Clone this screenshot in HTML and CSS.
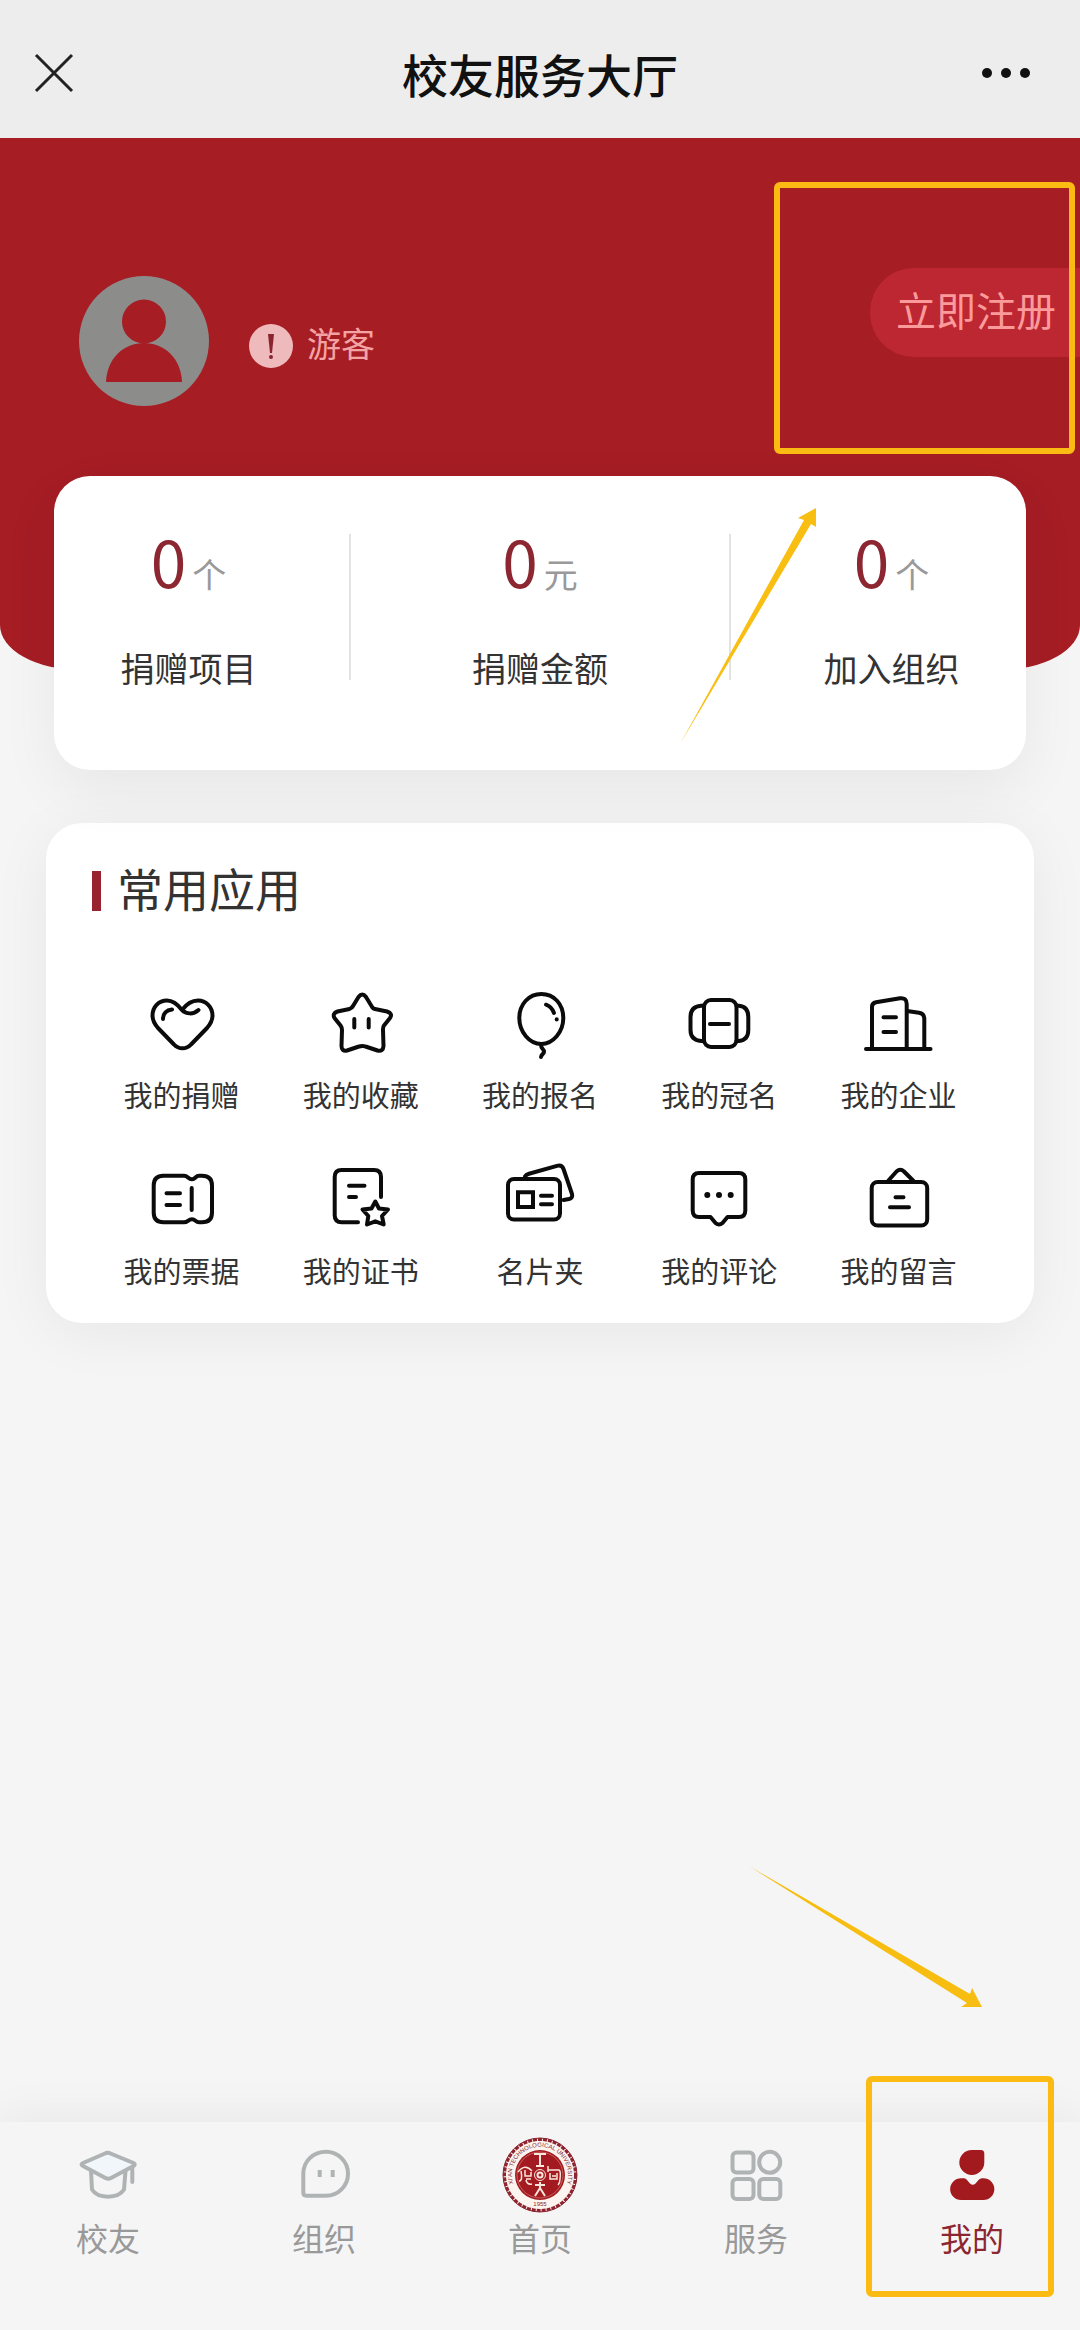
FILE: index.html
```html
<!DOCTYPE html>
<html lang="zh-CN">
<head>
<meta charset="utf-8">
<meta name="viewport" content="width=device-width, initial-scale=1">
<title>校友服务大厅</title>
<link rel="stylesheet" href="styles.css">
</head>
<body>
<div class="page">
  <header class="navbar">
    <button class="nav-btn" type="button" aria-label="关闭">
      <svg class="nav-icon" viewBox="0 0 40 40"><path d="M2 2 L38 38 M38 2 L2 38" stroke="#222" stroke-width="3" fill="none"/></svg>
    </button>
    <h1 class="nav-title">校友服务大厅</h1>
    <button class="nav-btn nav-more" type="button" aria-label="更多">
      <svg class="more-icon" viewBox="0 0 48 12"><g fill="#111"><circle cx="5" cy="6" r="5"/><circle cx="24" cy="6" r="5"/><circle cx="43" cy="6" r="5"/></g></svg>
    </button>
  </header>

  <main class="content">
    <section class="hero">
      <div class="profile">
        <svg class="avatar" viewBox="0 0 130 130"><circle cx="65" cy="65" r="65" fill="#8c8c8a"/><circle cx="65" cy="45.500" r="22" fill="#a61d24"/><path d="M27 106 C28 82 45 67 65 67 C85 67 102 82 103 106 Z" fill="#a61d24"/></svg>
        <div class="user">
          <svg class="badge" viewBox="0 0 44 44"><circle cx="22" cy="22" r="22" fill="#eebabc"/><path d="M19 10 H25 L23 29 H21 Z" fill="#8a2430"/><circle cx="22" cy="33" r="2" fill="#8a2430"/></svg>
          <span class="username">游客</span>
        </div>
      </div>
      <button class="register" type="button">立即注册</button>
      <div class="mark mark-register"></div>
    </section>

    <section class="stats">
      <div class="stat stat-first"><p class="stat-value">0<span class="unit">个</span></p><p class="stat-label">捐赠项目</p></div>
      <div class="stat stat-mid"><p class="stat-value">0<span class="unit">元</span></p><p class="stat-label">捐赠金额</p></div>
      <div class="stat stat-last"><p class="stat-value">0<span class="unit">个</span></p><p class="stat-label">加入组织</p></div>
      <svg class="arrow arrow-up" viewBox="0 0 140 256"><path d="M0 255 L124 31 L118 29 L136 19 V38 L131 35 Z" fill="#f9be12"/></svg>
    </section>

    <section class="apps">
      <h2 class="apps-title">常用应用</h2>
      <div class="app-grid">
        <a class="app" href="#"><svg class="app-icon" viewBox="0 0 72 72"><path d="M36 22 C31 15.500 27 12.500 21 12.500 C12.500 12.500 6.500 19 6.500 27.500 C6.500 32.500 8.500 36 12 40 L28 56.500 C32.500 61.500 40.500 61.500 45 56.500 L61 40 C64.500 36 66.500 32.500 66.500 27.500 C66.500 19 60 12.500 52 12.500 C45 12.500 40.500 16 36 22 C40 26 47 27 52.500 22"/><path d="M17 31 C17 25.500 20.500 22 26 21.500"/></svg><span>我的捐赠</span></a>
        <a class="app" href="#"><svg class="app-icon" viewBox="0 0 72 72"><path d="M33.500 9 Q37.300 4 41 9 L46.500 18 Q47.500 20.500 50 21 L62 23.500 Q68 25.500 65 30 L59 37.500 Q57.800 39 58 42 L58.500 58 Q58 64 52.500 62.500 L40.500 58.500 Q37.300 57.300 34 58.500 L22 62.500 Q16.500 63.500 16.500 58 L17 42 Q17 39.500 15.500 37.500 L9.500 30 Q7 25.500 12.500 23.500 L24.500 21 Q27 20 28 18 Z"/><path d="M29.300 31 V39.500 M43.700 31 V39.500"/></svg><span>我的收藏</span></a>
        <a class="app" href="#"><svg class="app-icon" viewBox="0 0 72 72"><path d="M37.300 6 C50 6 59.300 16 59.300 30 C59.300 44 49 56 37.300 56 C25.500 56 15.300 44 15.300 30 C15.300 16 25 6 37.300 6 Z"/><path d="M42 16.700 Q47.500 18.500 50 25"/><path d="M52.700 31.300 V31.400"/><path d="M37 57 C37 61 40 60.500 40 63.700 C40 66 37.500 66 37 69"/></svg><span>我的报名</span></a>
        <a class="app" href="#"><svg class="app-icon" viewBox="0 0 72 72"><rect x="21" y="12" width="32.500" height="47" rx="7"/><path d="M21 17.700 H18 Q7.500 18.500 7.500 29 V42 Q7.500 52 18 53 H21 M53.500 17.700 H56 Q65.300 18.500 65.300 29 V42 Q65.300 52 56 53 H53.500"/><path d="M27 36 H46"/></svg><span>我的冠名</span></a>
        <a class="app" href="#"><svg class="app-icon" viewBox="0 0 72 72"><path d="M4 61 H68.500"/><path d="M10 61 V19 Q10 15 14 14.300 L38 10.300 Q44.700 9.500 44.700 16 V61"/><path d="M45 23 L57 24.700 Q62.300 25.500 62.300 31 V61"/><path d="M21.500 29.300 H34 M21.500 44 H34"/></svg><span>我的企业</span></a>
        <a class="app" href="#"><svg class="app-icon" viewBox="0 0 72 72"><path d="M16 11.700 H38 C42 11.700 42 15.300 46 15.300 C49.500 15.300 49.500 11.700 53 11.700 H56 Q66 11.700 66 21.500 V48.500 Q66 58.300 56 58.300 H53 C49.500 58.300 49.500 55.300 46 55.300 C42 55.300 42 58.300 38 58.300 H17.500 Q7.700 58.300 7.700 48.500 V21.500 Q7.700 11.700 17.500 11.700 Z"/><path d="M45.700 24 V46 M20.500 29.300 H34 M20.500 41 H34"/></svg><span>我的票据</span></a>
        <a class="app" href="#"><svg class="app-icon" viewBox="0 0 72 72"><path d="M56 33 V13 Q56 6 49 6 H16.700 Q9.700 6 9.700 13 V51.300 Q9.700 58.300 16.700 58.300 H33"/><path d="M24 21.700 H39.500 M24 33 H31"/><path d="M50.300 37.500 L54 44.500 L63 45.500 L57 52 L58.700 60.500 L50.300 57.300 L42 60.500 L43.300 52 L37.500 45.500 L46.500 44.500 Z"/></svg><span>我的证书</span></a>
        <a class="app" href="#"><svg class="app-icon" viewBox="0 0 72 72"><rect x="4" y="15" width="52" height="40.500" rx="6"/><path d="M21 12.500 Q22 10.500 25 9.700 L53 1.800 Q58 0.500 59.500 5 L68 30 Q69 34 65 35 L59.500 36"/><path class="square" d="M14 28.300 H29 V43 H14 Z"/><path d="M37 31.700 H48 M37 40.300 H48"/></svg><span>名片夹</span></a>
        <a class="app" href="#"><svg class="app-icon" viewBox="0 0 72 72"><path d="M16 9 H56 Q62.300 9 62.300 15.500 V46.500 Q62.300 53 56 53 H44.500 L39.500 59 Q36 62 32.500 59 L27.500 53 H16 Q9.700 53 9.700 46.500 V15.500 Q9.700 9 16 9 Z"/><g class="dots"><circle cx="24.300" cy="31" r="3"/><circle cx="36" cy="31" r="3"/><circle cx="47.700" cy="31" r="3"/></g></svg><span>我的评论</span></a>
        <a class="app" href="#"><svg class="app-icon" viewBox="0 0 72 72"><rect x="9.700" y="18" width="55.500" height="43.500" rx="6"/><path d="M26 17 L34.500 7.500 Q38.300 4 42 7.500 L51.500 17"/><path d="M33.500 33.300 H41.500 M28 43.300 H47"/></svg><span>我的留言</span></a>
      </div>
    </section>
    <svg class="arrow arrow-down" viewBox="0 0 234 142"><path d="M0 0 L221 128 L223 122 L233 141 H212 L218 137 Z" fill="#f7bd10"/></svg>
  </main>

  <nav class="tabbar">
    <a class="tab" href="#"><svg class="tab-icon" viewBox="0 0 80 80"><path d="M23 36 L24 54.500 C30 64 50 64 56 54.500 L57.500 36" /><path d="M37 18.500 Q39.700 17 42.500 18.500 L65.500 28 Q68 29.500 65.500 31 L43 43 Q40.300 44.500 37.500 43 L15 31 Q12 29.500 15 28 Z" fill="#f0f6fa"/><path d="M64.300 33 V47"/></svg><span>校友</span></a>
    <a class="tab" href="#"><svg class="tab-icon" viewBox="0 0 80 80"><path d="M42 16.700 C54 16.700 64 26.500 64 38.700 C64 51 54 60.700 42 60.700 H22.500 Q19.300 60.700 19.300 57.500 V38.700 C19.300 26.500 29 16.700 42 16.700 Z"/><path class="eyes" d="M35.700 35 V42 M48.700 35 V42"/></svg><span>组织</span></a>
    <a class="tab" href="#"><svg class="seal" viewBox="0 0 80 80">
      <defs><path id="ring-top" d="M16.100 54.700 A28.100 28.100 0 1 1 63.900 54.700"/></defs>
      <circle cx="40" cy="40" r="37" fill="#fdf3ef" stroke="#8d2430" stroke-width="1"/>
      <circle cx="40" cy="40" r="35.500" fill="none" stroke="#8d2430" stroke-width="3" stroke-dasharray="4 1"/>
      <circle cx="40" cy="40" r="25" fill="#a31a20"/>
      <circle cx="40" cy="40" r="23" fill="none" stroke="#c9605f" stroke-width="1"/>
      <text class="seal-text"><textPath href="#ring-top" startOffset="50%" text-anchor="middle">XI'AN TECHNOLOGICAL UNIVERSITY</textPath></text>
      <text class="seal-text" x="40" y="71" text-anchor="middle">1955</text>
      <g fill="none" stroke="#fbe6dc" stroke-width="2"><path d="M34 19 H46 M40 19 V31 M36 31 H44"/><circle cx="40" cy="40" r="5.500" stroke-width="1"/><circle cx="40" cy="40" r="2.500"/><path d="M40 47 V54 M35 50 H45 M40 53 L35 61 M40 53 L45 61"/><path stroke-width="1.500" d="M18 37 Q25 28 32 36 M21 36 Q23 46 19 46 M25 35 V41 H31 V37 M26 44 H31 M26 45 Q27 50 32 49"/><path stroke-width="1.500" d="M48 37 V31 M48 35 H59 Q61 36 60 44 Q60 48 58 50 M50 38 V44 H57 V38 M52 41 H56"/></g>
    </svg><span>首页</span></a>
    <a class="tab" href="#"><svg class="tab-icon" viewBox="0 0 80 80"><rect x="16.500" y="17.500" width="21" height="20" rx="4"/><circle cx="53.700" cy="27.300" r="10.500"/><rect x="16.500" y="44" width="21" height="20" rx="4"/><rect x="43.300" y="44" width="21" height="20" rx="4"/></svg><span>服务</span></a>
    <a class="tab tab-active" href="#"><svg class="tab-icon" viewBox="0 0 80 80"><path class="solid" d="M39.700 15 H49 Q52.300 15 52.300 18.500 V27.500 A12.500 12.500 0 1 1 39.700 15 Z"/><path class="solid" d="M29 43.300 H32 Q34 43.300 35 45 L38 48.500 Q40.700 51 43.500 48.500 L46.500 45 Q48 43.300 50 43.300 H51.500 A10.800 10.800 0 0 1 51.500 65 H29 A10.800 10.800 0 0 1 29 43.300 Z"/></svg><span>我的</span></a>
    <div class="mark mark-mine"></div>
  </nav>
</div>
</body>
</html>
```
FILE: styles.css
```css
* {
  box-sizing: border-box;
}

body {
  margin: 0;
  background: #f5f5f5;
  color: #333;
  font-family: "Noto Sans CJK SC", "Noto Sans", sans-serif;
}

h1,
h2,
p {
  margin: 0;
}

button {
  border: 0;
  padding: 0;
  background: none;
  font-family: inherit;
}

a {
  color: inherit;
  text-decoration: none;
}

svg {
  display: block;
}

.page {
  display: flex;
  flex-direction: column;
  min-height: 100vh;
  overflow-x: hidden;
}

/* top bar */
.navbar {
  display: flex;
  align-items: center;
  justify-content: space-between;
  height: 138px;
  padding: 8px 34px 0;
  background: #ededed;
}

.nav-btn {
  display: flex;
  width: 72px;
}

.nav-more {
  justify-content: flex-end;
  padding-right: 16px;
}

.nav-icon {
  width: 40px;
  height: 40px;
}

.more-icon {
  width: 48px;
  height: 12px;
}

.nav-title {
  color: #111;
  font-size: 46px;
  font-weight: 500;
  line-height: 56px;
}

.content {
  position: relative;
  flex: 1;
}

/* profile banner */
.hero {
  position: relative;
  display: flex;
  justify-content: space-between;
  align-items: flex-start;
  height: 532px;
  padding: 130px 0 0 79px;
  border-radius: 0 0 80px 80px / 0 0 45px 45px;
  background: #a61d24;
}

.profile {
  display: flex;
  align-items: center;
  gap: 40px;
  margin-top: 8px;
}

.avatar {
  width: 130px;
  height: 130px;
}

.user {
  display: flex;
  align-items: center;
  gap: 14px;
  padding-top: 10px;
}

.badge {
  width: 44px;
  height: 44px;
}

.username {
  padding-bottom: 6px;
  color: #f4a3a4;
  font-size: 34px;
  line-height: 44px;
}

.register {
  width: 210px;
  height: 89px;
  padding-left: 26px;
  padding-bottom: 8px;
  border-radius: 44px 0 0 44px;
  background: #bc2732;
  color: #fb9a9b;
  font-size: 40px;
  line-height: 80px;
  text-align: left;
}

/* donation figures */
.stats {
  position: relative;
  display: grid;
  grid-template-columns: 11fr 14fr 11fr;
  align-items: start;
  height: 294px;
  margin: -194px 54px 0;
  padding-top: 58px;
  border-radius: 36px;
  background: #fff;
  box-shadow: 0 20px 60px rgba(0, 0, 0, 0.06);
}

.stat {
  height: 146px;
  text-align: center;
}

.stat-first {
  padding-right: 26px;
  border-right: 2px solid #e2e2e2;
}

.stat-last {
  padding-left: 26px;
  border-left: 2px solid #e2e2e2;
}

.stat-value {
  color: #8c2630;
  font-size: 64px;
  line-height: 52px;
}

.unit {
  margin-left: 6px;
  color: #999;
  font-size: 34px;
}

.stat-label {
  margin-top: 46px;
  font-size: 34px;
  line-height: 44px;
}

/* shortcuts */
.apps {
  margin: 53px 46px 0;
  padding: 42px 46px 31px;
  border-radius: 36px;
  background: #fff;
  box-shadow: 0 10px 60px rgba(0, 0, 0, 0.06);
}

.apps-title {
  display: flex;
  align-items: flex-start;
  gap: 16px;
  height: 52px;
  font-size: 46px;
  font-weight: 400;
  line-height: 44px;
}

.apps-title::before {
  content: "";
  width: 9px;
  height: 40px;
  margin-top: 6px;
  background: #98222d;
}

.app-grid {
  display: grid;
  grid-template-columns: repeat(5, 1fr);
  row-gap: 48px;
  margin-top: 71px;
}

.app {
  display: flex;
  flex-direction: column;
  align-items: center;
  gap: 12px;
  font-size: 29px;
  line-height: 44px;
}

.app-icon {
  width: 72px;
  height: 72px;
  fill: none;
  stroke: #0b0b0b;
  stroke-width: 4;
  stroke-linecap: round;
  stroke-linejoin: round;
  overflow: visible;
}

.app-icon .square {
  stroke-linejoin: miter;
}

.app-icon .dots {
  fill: #0b0b0b;
  stroke: none;
}

/* bottom tabs */
.tabbar {
  position: relative;
  display: grid;
  grid-template-columns: repeat(5, 1fr);
  height: 208px;
  padding-top: 13px;
  background: #f5f5f5;
  box-shadow: 0 -8px 40px rgba(0, 0, 0, 0.05);
}

.tab {
  display: flex;
  flex-direction: column;
  align-items: center;
  gap: 4px;
  color: #999;
  font-size: 32px;
  line-height: 36px;
}

.tab-active {
  color: #8c2630;
}

.tab-icon,
.seal {
  width: 80px;
  height: 80px;
}

.tab-icon {
  fill: none;
  stroke: #b0b3b4;
  stroke-width: 4;
  stroke-linecap: round;
  stroke-linejoin: round;
}

.tab-icon .eyes {
  stroke-linecap: butt;
}

.tab-icon .solid {
  fill: #a31a1e;
  stroke: none;
}

.seal-text {
  fill: #7d2a33;
  font-family: "Liberation Sans", sans-serif;
  font-size: 6px;
}

/* highlight frames and arrows drawn over the page */
.mark {
  position: absolute;
  border: 6px solid #fbbb12;
  border-radius: 6px;
  pointer-events: none;
}

.mark-register {
  top: 44px;
  right: 5px;
  width: 301px;
  height: 272px;
}

.mark-mine {
  top: -46px;
  right: 26px;
  width: 188px;
  height: 221px;
}

.arrow {
  position: absolute;
  pointer-events: none;
}

.arrow-up {
  top: 13px;
  right: 206px;
  width: 140px;
  height: 256px;
}

.arrow-down {
  right: 97px;
  bottom: 114px;
  width: 234px;
  height: 142px;
}
```
